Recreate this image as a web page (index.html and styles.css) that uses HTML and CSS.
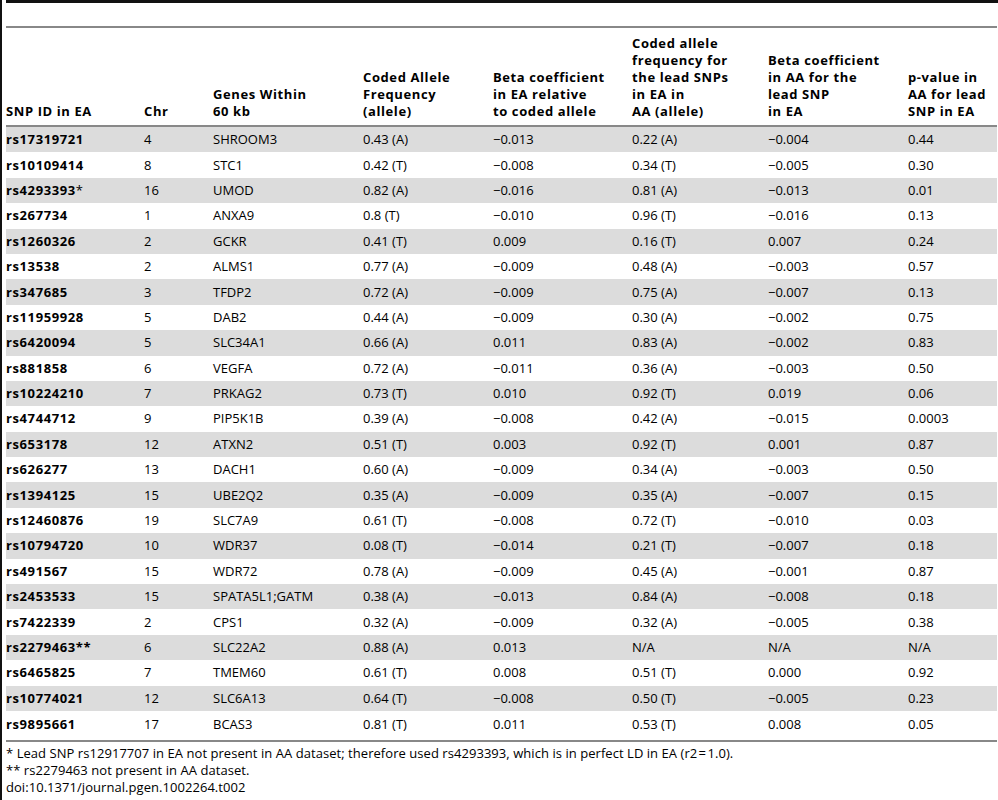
FILE: index.html
```html
<!DOCTYPE html>
<html lang="en">
<head>
    <meta charset="UTF-8">
    <title>Table 2</title>
    <link rel="stylesheet" href="styles.css">
</head>
<body>
    <div class="frame">
        <div class="top-rule"></div>
        <table class="snp-table">
            <thead>
                <tr>
                    <th class="c1">SNP ID in EA</th>
                    <th class="c2">Chr</th>
                    <th class="c3">Genes Within<br>60 kb</th>
                    <th class="c4">Coded Allele<br>Frequency<br>(allele)</th>
                    <th class="c5">Beta coefficient<br>in EA relative<br>to coded allele</th>
                    <th class="c6">Coded allele<br>frequency for<br>the lead SNPs<br>in EA in<br>AA (allele)</th>
                    <th class="c7">Beta coefficient<br>in AA for the<br>lead SNP<br>in EA</th>
                    <th class="c8">p-value in<br>AA for lead<br>SNP in EA</th>
                </tr>
            </thead>
            <tbody id="rows">
                <tr><td>rs17319721</td><td>4</td><td>SHROOM3</td><td>0.43 (A)</td><td>&minus;0.013</td><td>0.22 (A)</td><td>&minus;0.004</td><td>0.44</td></tr>
                <tr><td>rs10109414</td><td>8</td><td>STC1</td><td>0.42 (T)</td><td>&minus;0.008</td><td>0.34 (T)</td><td>&minus;0.005</td><td>0.30</td></tr>
                <tr><td>rs4293393<span class="mark">*</span></td><td>16</td><td>UMOD</td><td>0.82 (A)</td><td>&minus;0.016</td><td>0.81 (A)</td><td>&minus;0.013</td><td>0.01</td></tr>
                <tr><td>rs267734</td><td>1</td><td>ANXA9</td><td>0.8 (T)</td><td>&minus;0.010</td><td>0.96 (T)</td><td>&minus;0.016</td><td>0.13</td></tr>
                <tr><td>rs1260326</td><td>2</td><td>GCKR</td><td>0.41 (T)</td><td>0.009</td><td>0.16 (T)</td><td>0.007</td><td>0.24</td></tr>
                <tr><td>rs13538</td><td>2</td><td>ALMS1</td><td>0.77 (A)</td><td>&minus;0.009</td><td>0.48 (A)</td><td>&minus;0.003</td><td>0.57</td></tr>
                <tr><td>rs347685</td><td>3</td><td>TFDP2</td><td>0.72 (A)</td><td>&minus;0.009</td><td>0.75 (A)</td><td>&minus;0.007</td><td>0.13</td></tr>
                <tr><td>rs11959928</td><td>5</td><td>DAB2</td><td>0.44 (A)</td><td>&minus;0.009</td><td>0.30 (A)</td><td>&minus;0.002</td><td>0.75</td></tr>
                <tr><td>rs6420094</td><td>5</td><td>SLC34A1</td><td>0.66 (A)</td><td>0.011</td><td>0.83 (A)</td><td>&minus;0.002</td><td>0.83</td></tr>
                <tr><td>rs881858</td><td>6</td><td>VEGFA</td><td>0.72 (A)</td><td>&minus;0.011</td><td>0.36 (A)</td><td>&minus;0.003</td><td>0.50</td></tr>
                <tr><td>rs10224210</td><td>7</td><td>PRKAG2</td><td>0.73 (T)</td><td>0.010</td><td>0.92 (T)</td><td>0.019</td><td>0.06</td></tr>
                <tr><td>rs4744712</td><td>9</td><td>PIP5K1B</td><td>0.39 (A)</td><td>&minus;0.008</td><td>0.42 (A)</td><td>&minus;0.015</td><td>0.0003</td></tr>
                <tr><td>rs653178</td><td>12</td><td>ATXN2</td><td>0.51 (T)</td><td>0.003</td><td>0.92 (T)</td><td>0.001</td><td>0.87</td></tr>
                <tr><td>rs626277</td><td>13</td><td>DACH1</td><td>0.60 (A)</td><td>&minus;0.009</td><td>0.34 (A)</td><td>&minus;0.003</td><td>0.50</td></tr>
                <tr><td>rs1394125</td><td>15</td><td>UBE2Q2</td><td>0.35 (A)</td><td>&minus;0.009</td><td>0.35 (A)</td><td>&minus;0.007</td><td>0.15</td></tr>
                <tr><td>rs12460876</td><td>19</td><td>SLC7A9</td><td>0.61 (T)</td><td>&minus;0.008</td><td>0.72 (T)</td><td>&minus;0.010</td><td>0.03</td></tr>
                <tr><td>rs10794720</td><td>10</td><td>WDR37</td><td>0.08 (T)</td><td>&minus;0.014</td><td>0.21 (T)</td><td>&minus;0.007</td><td>0.18</td></tr>
                <tr><td>rs491567</td><td>15</td><td>WDR72</td><td>0.78 (A)</td><td>&minus;0.009</td><td>0.45 (A)</td><td>&minus;0.001</td><td>0.87</td></tr>
                <tr><td>rs2453533</td><td>15</td><td>SPATA5L1;GATM</td><td>0.38 (A)</td><td>&minus;0.013</td><td>0.84 (A)</td><td>&minus;0.008</td><td>0.18</td></tr>
                <tr><td>rs7422339</td><td>2</td><td>CPS1</td><td>0.32 (A)</td><td>&minus;0.009</td><td>0.32 (A)</td><td>&minus;0.005</td><td>0.38</td></tr>
                <tr><td>rs2279463**</td><td>6</td><td>SLC22A2</td><td>0.88 (A)</td><td>0.013</td><td>N/A</td><td>N/A</td><td>N/A</td></tr>
                <tr><td>rs6465825</td><td>7</td><td>TMEM60</td><td>0.61 (T)</td><td>0.008</td><td>0.51 (T)</td><td>0.000</td><td>0.92</td></tr>
                <tr><td>rs10774021</td><td>12</td><td>SLC6A13</td><td>0.64 (T)</td><td>&minus;0.008</td><td>0.50 (T)</td><td>&minus;0.005</td><td>0.23</td></tr>
                <tr><td>rs9895661</td><td>17</td><td>BCAS3</td><td>0.81 (T)</td><td>0.011</td><td>0.53 (T)</td><td>0.008</td><td>0.05</td></tr>
            </tbody>
        </table>
        <div class="notes">
            <p>* Lead SNP rs12917707 in EA not present in AA dataset; therefore used rs4293393, which is in perfect LD in EA (r2&#8202;=&#8202;1.0).</p>
            <p>** rs2279463 not present in AA dataset.</p>
            <p>doi:10.1371/journal.pgen.1002264.t002</p>
        </div>
    </div>
</body>
</html>
```

FILE: styles.css
```css
body {
    margin: 0;
    padding: 0;
    background: #fff;
    color: #000;
    font-family: "Open Sans", "DejaVu Sans", sans-serif;
    font-size: 13px;
}

.frame {
    border-left: 2px solid #111;
    padding-left: 4px;
    min-height: 800px;
    box-sizing: border-box;
}

.top-rule {
    border-top: 3px solid #111;
    height: 23px;
}

.snp-table {
    width: 991px;
    border-collapse: collapse;
    table-layout: fixed;
    border-top: 2px solid #888;
    border-bottom: 2px solid #888;
}

.snp-table th {
    font-weight: bold;
    letter-spacing: 0.6px;
    text-align: left;
    vertical-align: bottom;
    line-height: 17px;
    padding: 0 0 5px 0;
    height: 99px;
    box-sizing: border-box;
    border-bottom: 2px solid #888;
}

.snp-table .c1 { width: 138px; }
.snp-table .c2 { width: 69px; }
.snp-table .c3 { width: 150px; }
.snp-table .c4 { width: 130px; }
.snp-table .c5 { width: 139px; }
.snp-table .c6 { width: 136px; }
.snp-table .c7 { width: 140px; }
.snp-table .c8 { width: 89px; }

.snp-table td {
    height: 25.4px;
    padding: 0;
    line-height: 17px;
    vertical-align: middle;
    white-space: nowrap;
}

.snp-table td:first-child {
    font-weight: bold;
    letter-spacing: 0.6px;
}

.snp-table .mark {
    font-weight: normal;
}

.snp-table tbody tr:nth-child(odd) {
    background-color: #dcdcdc;
}

.snp-table tbody tr:last-child td {
    height: 27px;
    padding-bottom: 2px;
}

.notes {
    padding-top: 3px;
    letter-spacing: 0.05px;
}

.notes p {
    margin: 0;
    line-height: 17px;
}
```
